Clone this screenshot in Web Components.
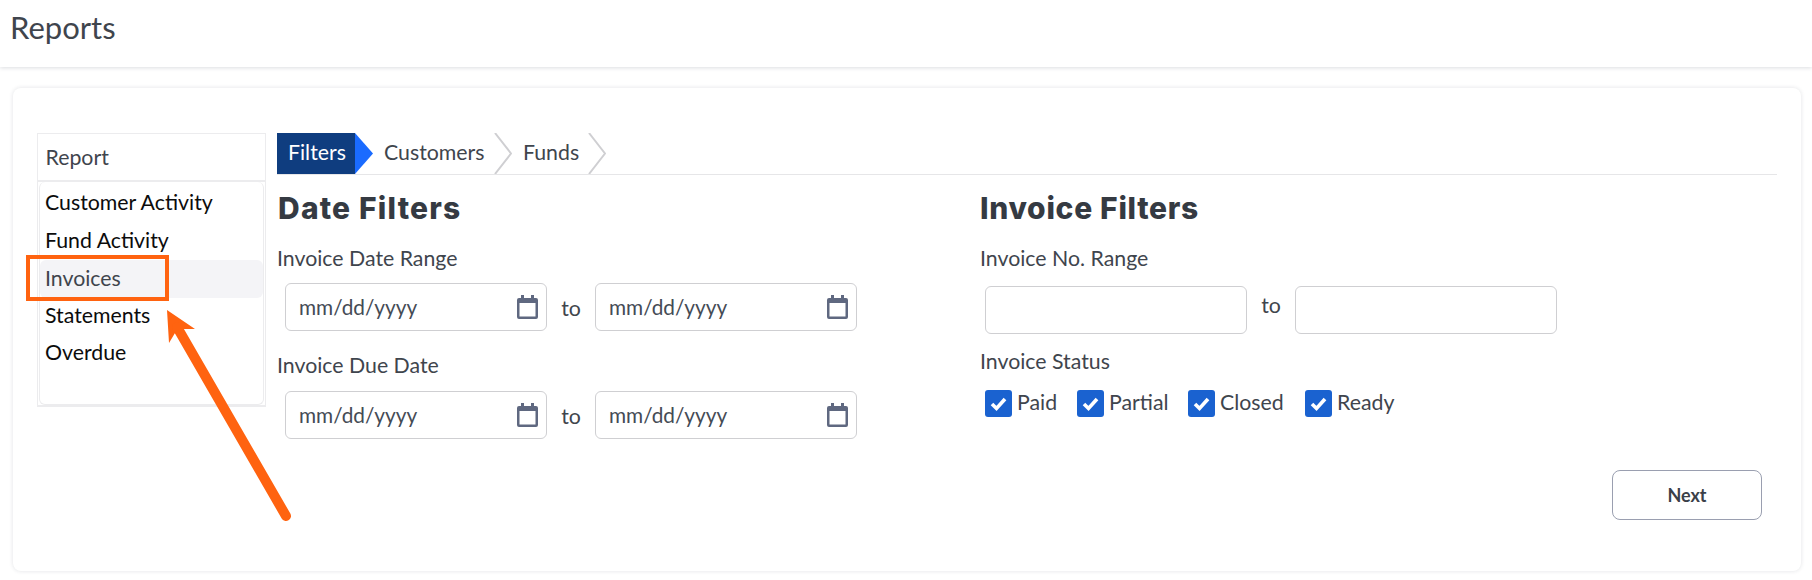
<!DOCTYPE html>
<html lang="en">
<head>
<meta charset="utf-8">
<title>Reports</title>
<style>
	html, body { margin: 0; padding: 0; }
	body {
		width: 1812px;
		height: 580px;
		overflow: hidden;
		position: relative;
		background: #fff;
		color: #3a4048;
		font-family: Lato, "Liberation Sans", sans-serif;
		font-size: 21.3px;
	}
</style>
</head>
<body>
<app-header>Reports</app-header>
<report-card>
	<report-list slot="side" heading="Report">
		<report-item>Customer Activity</report-item>
		<report-item>Fund Activity</report-item>
		<report-item selected>Invoices</report-item>
		<report-item>Statements</report-item>
		<report-item>Overdue</report-item>
	</report-list>
	<step-bar slot="steps">
		<step-tab active>Filters</step-tab>
		<step-tab style="--w:139px;--pad:11px">Customers</step-tab>
		<step-tab style="--w:94px;--pad:11px">Funds</step-tab>
	</step-bar>
	<filter-group slot="left" heading="Date Filters" style="--ls:1.2px;--nudge:1px">
		<field-label>Invoice Date Range</field-label>
		<range-row style="--top:12px;--indent:8px"><date-box></date-box><date-box></date-box></range-row>
		<field-label style="--top:23px">Invoice Due Date</field-label>
		<range-row style="--top:13px;--indent:8px"><date-box></date-box><date-box></date-box></range-row>
	</filter-group>
	<filter-group slot="right" heading="Invoice Filters">
		<field-label>Invoice No. Range</field-label>
		<range-row style="--top:15px;--indent:5px;--to-shift:-5px"><date-box blank></date-box><date-box blank></date-box></range-row>
		<field-label style="--top:16px">Invoice Status</field-label>
		<check-row>
			<check-item style="--w:92px">Paid</check-item>
			<check-item style="--w:111px">Partial</check-item>
			<check-item style="--w:117px">Closed</check-item>
			<check-item>Ready</check-item>
		</check-row>
	</filter-group>
	<next-button slot="actions">Next</next-button>
</report-card>
<callout-arrow></callout-arrow>

<script>
// small helper so each component is just a style + markup string
function component(name, css, html, setup) {
	customElements.define(name, class extends HTMLElement {
		constructor() {
			super();
			this.shadowEl = this.attachShadow({mode:'open'});
			this.shadowEl.innerHTML = `<style>${css}</style>${html}`;
		}
		connectedCallback() {
			if (setup) setup(this, this.shadowEl);
		}
	});
}

component('app-header', `
	:host {
		display: block;
		height: 67px;
		box-sizing: border-box;
		padding: 8px 0 0 10px;
		background: #fff;
		box-shadow: 0 1px 4px rgba(40, 50, 70, 0.16);
		font-size: 31px;
		line-height: 38px;
		color: #3f454d;
	}`, `<slot></slot>`);

component('report-card', `
	:host {
		display: grid;
		grid-template-columns: 229px 1fr;
		column-gap: 11px;
		align-items: start;
		box-sizing: border-box;
		width: 1788px;
		height: 483px;
		margin: 21px 11px 0 13px;
		padding: 45px 24px 0 24px;
		background: #fff;
		border-radius: 8px;
		box-shadow: 0 0 4px rgba(40, 50, 70, 0.14);
	}
	.columns { display: grid; grid-template-columns: 703px 1fr; }
	.actions { display: flex; justify-content: flex-end; margin: 31px 15px 0 0; }
	`, `
	<slot name="side"></slot>
	<div>
		<slot name="steps"></slot>
		<div class="columns"><slot name="left"></slot><slot name="right"></slot></div>
		<div class="actions"><slot name="actions"></slot></div>
	</div>`);

component('report-list', `
	:host {
		display: block;
		height: 274px;
		box-sizing: border-box;
		border: 1px solid #ececee;
		border-bottom-width: 2px;
	}
	.head {
		height: 48px;
		box-sizing: border-box;
		padding: 0 0 0 7.5px;
		line-height: 46px;
		border-bottom: 2px solid #ececee;
		color: #3f454d;
	}
	.list {
		height: 223px;
		box-sizing: border-box;
		margin: 0 1px;
		padding: 3px 0 0;
		border: 1px solid #ececee;
		border-top: 0;
		border-radius: 6px;
	}`, `<div class="head"></div><div class="list"><slot></slot></div>`,
	(el, root) => { root.querySelector('.head').textContent = el.getAttribute('heading'); });

component('report-item', `
	:host {
		display: block;
		height: 37.5px;
		line-height: 34px;
		padding-left: 5px;
		border-radius: 6px;
		color: #0c0c0c;
	}
	:host([selected]) { background: #f4f4f7; color: #3f454d; line-height: 37.5px; }`, `<slot></slot>`);

component('step-bar', `
	:host {
		display: flex;
		height: 42px;
		box-sizing: border-box;
		border-bottom: 1px solid #e6e6e8;
	}`, `<slot></slot>`);

component('step-tab', `
	:host {
		display: block;
		position: relative;
		width: var(--w, 96px);
		height: 41px;
		box-sizing: border-box;
		padding-left: var(--pad, 11px);
		line-height: 38px;
		color: #3f454d;
	}
	.label { position: relative; }
	svg { position: absolute; right: 0; top: 0; }
	:host([active]) { color: #fff; }
	.fill {
		position: absolute;
		left: 0;
		top: 0;
		display: flex;
		width: 96px;
		height: 41px;
	}
	.fill i { display: block; width: 78px; background: #0f3d7f; }
	.fill b {
		display: block;
		width: 18px;
		background: #1a6bff;
		clip-path: polygon(0 0, 100% 50%, 0 100%);
	}`, `<div class="fill"><i></i><b></b></div><span class="label"><slot></slot></span><svg width="18" height="41" viewBox="0 0 18 41"><path d="M1 0 L17 20.5 L1 41" fill="none" stroke="#cfcfd2" stroke-width="2"/></svg>`,
	(el, root) => {
		if (el.hasAttribute('active')) root.querySelector('svg').remove();
		else root.querySelector('.fill').remove();
	});

component('filter-group', `
	:host { display: block; }
	h2 {
		margin: 0 0 0 var(--nudge, 0);
		height: 72px;
		padding-top: 12px;
		box-sizing: border-box;
		font-family: Inter, sans-serif;
		font-size: 30px;
		line-height: 42px;
		font-weight: 800;
		letter-spacing: var(--ls, 0.7px);
		color: #353a42;
	}`, `<h2></h2><slot></slot>`,
	(el, root) => { root.querySelector('h2').textContent = el.getAttribute('heading'); });

component('field-label', `
	:host {
		display: block;
		margin-top: var(--top, 0);
		height: 24px;
		line-height: 22px;
		color: #3f454d;
	}`, `<slot></slot>`);

component('range-row', `
	:host {
		display: grid;
		grid-template-columns: 262px 48px 262px;
		margin: var(--top, 0) 0 0 var(--indent, 0);
	}
	span {
		display: block;
		line-height: 48px;
		text-align: center;
		color: #3f454d;
		transform: translateY(var(--to-shift, 1px));
	}`, `<slot id="a"></slot><span>to</span><slot id="b"></slot>`,
	(el, root) => {
		// the two boxes go either side of the "to"
		let boxes = el.querySelectorAll('date-box');
		boxes[0].slot = 'from';
		boxes[1].slot = 'until';
		root.querySelector('#a').name = 'from';
		root.querySelector('#b').name = 'until';
	});

component('date-box', `
	:host {
		display: flex;
		align-items: center;
		justify-content: space-between;
		height: 48px;
		box-sizing: border-box;
		padding: 0 8px 0 13px;
		border: 1px solid #cfcfd2;
		border-radius: 6px;
		font-size: 20.8px;
		color: #454b55;
	}
	span { margin-top: -2px; }
	svg { display: block; margin-top: -1px; }`, `
	<span>mm/dd/yyyy</span>
	<svg width="21" height="24" viewBox="0 0 21 24"><path fill="#5f6880" fill-rule="evenodd" d="M4 0h3v3h7V0h3v3h2a2 2 0 0 1 2 2v17a2 2 0 0 1-2 2H2a2 2 0 0 1-2-2V5a2 2 0 0 1 2-2h2zM2.5 8v13.5h16V8z"/></svg>`,
	(el, root) => {
		if (el.hasAttribute('blank')) {
			root.querySelector('span').remove();
			root.querySelector('svg').remove();
		}
	});

component('check-row', `
	:host { display: flex; margin: 16px 0 0 5px; line-height: 25px; }`, `<slot></slot>`);

component('check-item', `
	:host {
		display: flex;
		align-items: flex-start;
		width: var(--w, auto);
		height: 27px;
		color: #3f454d;
	}
	.box {
		width: 27px;
		height: 27px;
		margin-right: 5px;
		border-radius: 3px;
		background: #1a62d0;
	}
	svg { display: block; }`, `
	<div class="box"><svg width="27" height="27" viewBox="0 0 27 27"><path d="M7 14 L11.5 18.5 L20 9" fill="none" stroke="#fff" stroke-width="3.6"/></svg></div>
	<slot></slot>`);

component('next-button', `
	:host {
		display: block;
		width: 150px;
		height: 50px;
		box-sizing: border-box;
		border: 1px solid #9a9fb0;
		border-radius: 8px;
		text-align: center;
		line-height: 48px;
		font-size: 18px;
		font-weight: 700;
		color: #3a4048;
	}`, `<slot></slot>`);

// orange annotation drawn over the sidebar
component('callout-arrow', `
	:host {
		position: absolute;
		left: 0;
		top: 0;
		width: 400px;
		height: 580px;
		pointer-events: none;
	}`, `
	<svg width="400" height="580" viewBox="0 0 400 580">
		<rect x="28" y="257" width="139" height="42" fill="none" stroke="#ff6310" stroke-width="4"/>
		<path d="M167 310 L195 329 L183 329 L175 333 L169 343z" fill="#ff6310"/>
		<path d="M177 327 L286 516" fill="none" stroke="#ff6310" stroke-width="10" stroke-linecap="round"/>
	</svg>`);
</script>
</body>
</html>
